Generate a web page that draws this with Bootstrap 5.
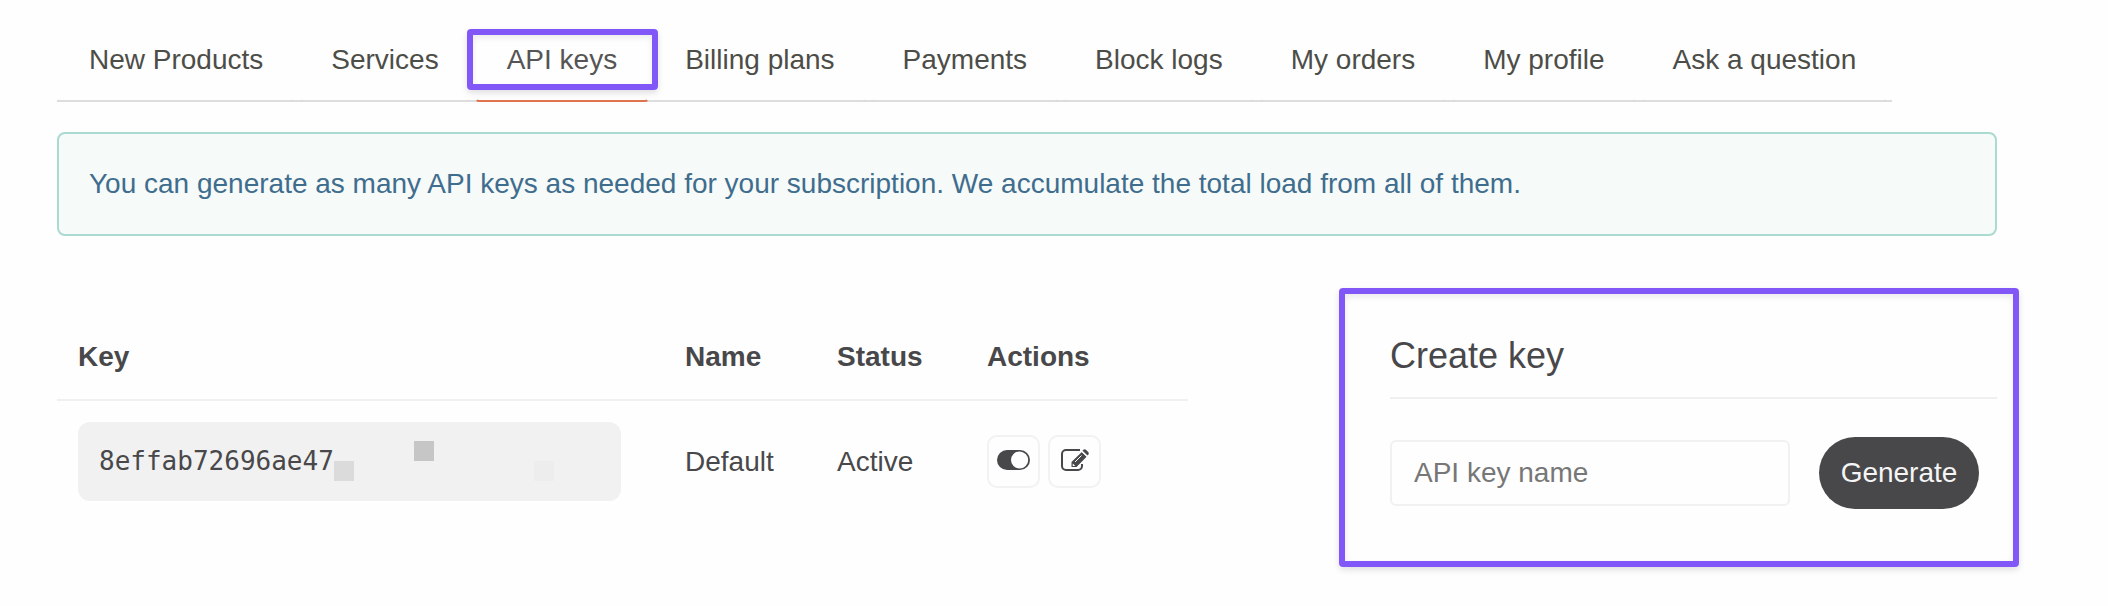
<!DOCTYPE html>
<html lang="en">
<head>
<meta charset="utf-8">
<meta name="viewport" content="width=device-width, initial-scale=1">
<title>API keys</title>
<link href="https://cdn.jsdelivr.net/npm/bootstrap@5.3.0/dist/css/bootstrap.min.css" rel="stylesheet">
<style>
  body { font-family: "Liberation Sans", Arial, sans-serif; font-size: 28px; line-height: 40px; color: #48484a; background: #fefefe; }
  .page { padding: 18px 89px 32px 57px; }

  /* account tabs */
  .account-tabs { --bs-nav-tabs-border-width: 2px; --bs-nav-tabs-border-color: #dddddd; --bs-nav-tabs-border-radius: 8px; width: fit-content; }
  .account-tabs .nav-item { margin-right: 4px; margin-bottom: -2px; position: relative; }
  .account-tabs .nav-link { margin: 0; padding: 20px 30px; color: #4d4d48; border: 2px solid transparent; border-bottom-color: #dddddd; border-radius: 4px; line-height: 40px; }
  .account-tabs .nav-link.active { background: transparent; color: #555; border-color: transparent transparent #df744f; }
  .marked { border: 6px solid #8257f8; border-radius: 4px; box-shadow: 0 3px 6px rgba(0,0,0,.12), inset 0 3px 6px rgba(0,0,0,.08); }
  .tab-mark { inset: 11px -9px 12px -8px; pointer-events: none; }

  .hint { margin: 30px 22px 52px 0; padding: 30px; background: #f6faf9; border: 2px solid #a9dbd0; border-radius: 8px; color: #3f6d8e; }

  .key-grid { display: grid; grid-template-columns: minmax(0, 1131fr) minmax(0, 680fr); column-gap: 151px; align-items: start; }

  /* key list */
  .key-table { --bs-table-bg: transparent; --bs-table-color: #48484a; margin: 27px 0 0; table-layout: fixed; color: #48484a; }
  .key-table > :not(caption) > * > * { padding: 21px; vertical-align: middle; border: 0; }
  .key-table > thead > tr > th { border-bottom: 2px solid #f0f0f0; padding-top: 22px; padding-bottom: 22px; }
  .key-table > :not(caption) > * > .key-cell { padding-right: 43px; }
  .col-name { width: 152px; }
  .col-status { width: 150px; }
  .col-actions { width: 222px; }
  .key-box { display: block; position: relative; padding: 20px 21px; background: #f1f1f1; border-radius: 12px; color: #48484a; font: 26px/39px "DejaVu Sans Mono", monospace; }
  .mask { position: absolute; width: 20px; height: 20px; }
  .mask-a { left: 256px; top: 39px; background: #dbdbdb; }
  .mask-b { left: 336px; top: 19px; background: #c6c6c6; }
  .mask-c { left: 456px; top: 39px; background: #ededed; }
  .icon-btn { width: 53px; height: 53px; padding: 0 0 4px; border: 2px solid #f2f2f2; border-radius: 10px; background: #fefefe; color: #48484a; }

  /* create form */
  .create-panel { padding: 40px 16px 52px 45px; }
  .create-panel h2 { font-size: 36px; line-height: 44px; font-weight: 400; margin: 0 0 38px; padding-bottom: 19px; border-bottom: 2px solid #f0f0f0; }
  .create-panel form { gap: 29px; padding-right: 18px; }
  .create-panel .form-control { height: 66px; padding: 0 22px; font-size: 28px; border: 2px solid #f1f1f1; border-radius: 6px; background: #fefefe; color: #48484a; }
  .create-panel .form-control::placeholder { color: #777; }
  .generate { width: 160px; height: 72px; padding: 0; border: 0; font-size: 28px; background: #48484a; color: #f5f5f5; }
  .generate:hover { background: #333; color: #fff; }
</style>
</head>
<body>
<main class="page">
  <ul class="nav nav-tabs account-tabs">
    <li class="nav-item"><a class="nav-link" href="#products">New Products</a></li>
    <li class="nav-item"><a class="nav-link" href="#services">Services</a></li>
    <li class="nav-item"><a class="nav-link active" aria-current="page" href="#keys">API keys</a><span class="position-absolute marked tab-mark"></span></li>
    <li class="nav-item"><a class="nav-link" href="#plans">Billing plans</a></li>
    <li class="nav-item"><a class="nav-link" href="#payments">Payments</a></li>
    <li class="nav-item"><a class="nav-link" href="#logs">Block logs</a></li>
    <li class="nav-item"><a class="nav-link" href="#orders">My orders</a></li>
    <li class="nav-item"><a class="nav-link" href="#profile">My profile</a></li>
    <li class="nav-item"><a class="nav-link" href="#ask">Ask a question</a></li>
  </ul>

  <div class="alert hint" role="alert">You can generate as many API keys as needed for your subscription. We accumulate the total load from all of them.</div>

  <div class="key-grid">
    <table class="table key-table">
      <thead>
        <tr><th scope="col">Key</th><th class="col-name" scope="col">Name</th><th class="col-status" scope="col">Status</th><th class="col-actions" scope="col">Actions</th></tr>
      </thead>
      <tbody>
        <tr>
          <td class="key-cell"><code class="key-box">8effab72696ae47<span class="mask mask-a"></span><span class="mask mask-b"></span><span class="mask mask-c"></span></code></td>
          <td>Default</td>
          <td>Active</td>
          <td>
            <div class="d-flex gap-2">
              <button type="button" class="btn icon-btn d-flex align-items-center justify-content-center" aria-label="Toggle key">
                <svg width="33" height="20" viewBox="0 0 33 20"><rect width="33" height="20" rx="10" fill="currentColor"/><circle cx="22.600" cy="10" r="8.600" fill="#fefefe"/></svg>
              </button>
              <button type="button" class="btn icon-btn d-flex align-items-center justify-content-center" aria-label="Edit key">
                <svg width="28" height="22" viewBox="0 0 28 22"><path d="M19 1H5A4 4 0 0 0 1 5V17A4 4 0 0 0 5 21H17A4 4 0 0 0 21 17V15" fill="none" stroke="currentColor" stroke-width="2"/><path d="M10.500 18V13L20.800 3L25.600 7.700L15.500 18Z" fill="currentColor"/><path d="M22 1.200Q23.500-.5 25.200 1L27.200 3Q28.500 4.500 27 6L26.400 6.600L21.400 1.800Z" fill="currentColor"/><path d="M20.300 1.800L26.700 7.700" stroke="#fefefe" stroke-width="1.200"/><path d="M14 13L20.500 6.500" stroke="#fefefe" stroke-width="1"/><path d="M11.800 14.400L14.200 16.700L13.100 17.100H11.700Z" fill="#fefefe"/></svg>
              </button>
            </div>
          </td>
        </tr>
      </tbody>
    </table>

    <section class="marked create-panel">
      <h2>Create key</h2>
      <form class="d-flex align-items-center">
        <input type="text" class="form-control" aria-label="API key name" placeholder="API key name">
        <button type="button" class="btn rounded-pill flex-shrink-0 generate">Generate</button>
      </form>
    </section>
  </div>
</main>
<script src="https://cdn.jsdelivr.net/npm/bootstrap@5.3.0/dist/js/bootstrap.bundle.min.js"></script>
</body>
</html>
